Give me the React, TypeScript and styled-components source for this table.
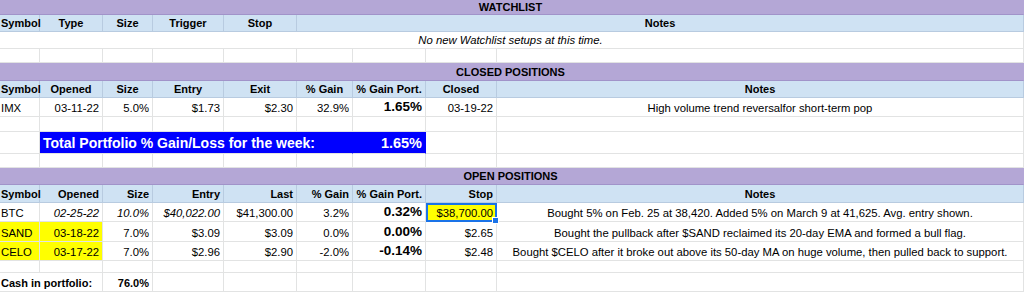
import React from 'react';
import styled, { createGlobalStyle } from 'styled-components';

const GlobalStyle = createGlobalStyle`
  html, body {
    margin: 0;
    padding: 0;
    background: #ffffff;
  }
  body {
    font-family: "Liberation Sans", Arial, sans-serif;
    font-size: 11px;
    color: #000000;
  }
`;

type Align = 'left' | 'center' | 'right';
type Kind = 'title' | 'head' | 'body';

const justify = (a?: Align) => (a === 'right' ? 'flex-end' : a === 'center' ? 'center' : 'flex-start');

const Sheet = styled.div`
  width: 1024px;
  height: 292px;
  overflow: hidden;
  background: #ffffff;
`;

const Row = styled.div<{ $h: number; $kind?: Kind }>`
  display: grid;
  grid-template-columns: 40px 63px 50px 71px 73px 56px 73px 71px 1fr;
  height: ${(p) => p.$h}px;
  background: ${(p) => (p.$kind === 'title' ? '#b4a7d6' : p.$kind === 'head' ? '#cfe2f3' : '#ffffff')};
  box-sizing: border-box;
`;

const Cell = styled.div<{
  $span?: number;
  $align?: Align;
  $bold?: boolean;
  $italic?: boolean;
  $size?: number;
  $bg?: string;
  $kind?: Kind;
  $white?: boolean;
}>`
  grid-column: span ${(p) => p.$span ?? 1};
  display: flex;
  align-items: flex-end;
  justify-content: ${(p) => justify(p.$align)};
  padding: 0 3px 2px 3px;
  box-sizing: border-box;
  min-width: 0;
  white-space: nowrap;
  overflow: visible;
  position: relative;
  font-size: ${(p) => p.$size ?? (p.$bold ? 11 : 11.3)}px;
  font-weight: ${(p) => (p.$bold ? 700 : 400)};
  font-style: ${(p) => (p.$italic ? 'italic' : 'normal')};
  color: ${(p) => (p.$white ? '#ffffff' : '#000000')};
  background: ${(p) => p.$bg ?? 'transparent'};
  border-right: 1px solid
    ${(p) => (p.$bg === '#0000ff' ? '#0000ff' : p.$kind === 'head' ? '#b8cbe0' : p.$kind === 'title' ? '#b4a7d6' : '#e2e3e3')};
  border-bottom: 1px solid
    ${(p) => (p.$kind === 'head' ? '#b8cbe0' : p.$kind === 'title' ? '#a193c9' : '#e2e3e3')};

  &:first-child {
    padding-left: 1px;
  }
`;

const TitleCell = styled(Cell)`
  align-items: center;
  padding-bottom: 0;
`;

const Selected = styled(Cell)`
  border: 2px solid #1a73e8;
  padding: 0 2px 1px 2px;
`;

const Handle = styled.span`
  position: absolute;
  right: -4px;
  bottom: -4px;
  width: 5px;
  height: 5px;
  background: #1a73e8;
  border: 1px solid #ffffff;
  z-index: 2;
`;

type C = {
  t?: string;
  span?: number;
  align?: Align;
  bold?: boolean;
  italic?: boolean;
  size?: number;
  bg?: string;
  white?: boolean;
};

const Line: React.FC<{ h: number; kind?: Kind; cells: C[] }> = ({ h, kind = 'body', cells }) => (
  <Row $h={h} $kind={kind}>
    {cells.map((c, i) => (
      <Cell
        key={i}
        $kind={kind}
        $span={c.span}
        $align={c.align ?? (kind === 'head' ? 'center' : 'left')}
        $bold={c.bold ?? kind === 'head'}
        $italic={c.italic}
        $size={c.size}
        $bg={c.bg}
        $white={c.white}
      >
        {c.t}
      </Cell>
    ))}
  </Row>
);

const Title: React.FC<{ h: number; text: string }> = ({ h, text }) => (
  <Row $h={h} $kind="title">
    <TitleCell $kind="title" $span={9} $align="center" $bold>
      {text}
    </TitleCell>
  </Row>
);

const blanks = (n: number): C[] => Array.from({ length: n }, () => ({}));

const R = (t: string, extra: Partial<C> = {}): C => ({ t, align: 'right', ...extra });
const N = (t: string): C => ({ t, align: 'center' });
const Y = '#ffff00';
const BIG = 13.5;

export default function App() {
  return (
    <>
      <GlobalStyle />
      <Sheet>
        <Title h={15} text="WATCHLIST" />
        <Line
          h={17}
          kind="head"
          cells={[{ t: 'Symbol', align: 'left' }, { t: 'Type' }, { t: 'Size' }, { t: 'Trigger' }, { t: 'Stop' }, { t: 'Notes', span: 4 }]}
        />
        <Line h={17} cells={[{ t: 'No new Watchlist setups at this time.', span: 9, align: 'center', italic: true }]} />
        <Line h={14} cells={blanks(9)} />

        <Title h={18} text="CLOSED POSITIONS" />
        <Line
          h={17}
          kind="head"
          cells={[
            { t: 'Symbol', align: 'left' },
            { t: 'Opened' },
            { t: 'Size' },
            { t: 'Entry' },
            { t: 'Exit' },
            { t: '% Gain' },
            { t: '% Gain Port.' },
            { t: 'Closed' },
            { t: 'Notes' },
          ]}
        />
        <Line
          h={19}
          cells={[
            { t: 'IMX' },
            R('03-11-22'),
            R('5.0%'),
            R('$1.73'),
            R('$2.30'),
            R('32.9%'),
            R('1.65%', { bold: true, size: BIG }),
            R('03-19-22'),
            N('High volume trend reversalfor short-term pop'),
          ]}
        />
        <Line h={15} cells={blanks(9)} />
        <Line
          h={22}
          cells={[
            {},
            { t: 'Total Portfolio % Gain/Loss for the week:', span: 5, bold: true, size: 14, bg: '#0000ff', white: true },
            R('1.65%', { bold: true, size: 14.5, bg: '#0000ff', white: true }),
            {},
            {},
          ]}
        />
        <Line h={14} cells={blanks(9)} />

        <Title h={17} text="OPEN POSITIONS" />
        <Line
          h={18}
          kind="head"
          cells={[
            { t: 'Symbol', align: 'left' },
            R('Opened'),
            R('Size'),
            R('Entry'),
            R('Last'),
            R('% Gain'),
            R('% Gain Port.'),
            R('Stop'),
            { t: 'Notes' },
          ]}
        />
        <Row $h={19}>
          <Cell>BTC</Cell>
          <Cell $align="right" $italic>02-25-22</Cell>
          <Cell $align="right" $italic>10.0%</Cell>
          <Cell $align="right" $italic>$40,022.00</Cell>
          <Cell $align="right">$41,300.00</Cell>
          <Cell $align="right">3.2%</Cell>
          <Cell $align="right" $bold $size={BIG}>0.32%</Cell>
          <Selected $align="right" $bg={Y}>
            $38,700.00
            <Handle />
          </Selected>
          <Cell $align="center">Bought 5% on Feb. 25 at 38,420. Added 5% on March 9 at 41,625. Avg. entry shown.</Cell>
        </Row>
        <Line
          h={20}
          cells={[
            { t: 'SAND', bg: Y },
            R('03-18-22', { bg: Y }),
            R('7.0%'),
            R('$3.09'),
            R('$3.09'),
            R('0.0%'),
            R('0.00%', { bold: true, size: BIG }),
            R('$2.65'),
            N('Bought the pullback after $SAND reclaimed its 20-day EMA and formed a bull flag.'),
          ]}
        />
        <Line
          h={19}
          cells={[
            { t: 'CELO', bg: Y },
            R('03-17-22', { bg: Y }),
            R('7.0%'),
            R('$2.96'),
            R('$2.90'),
            R('-2.0%'),
            R('-0.14%', { bold: true, size: BIG }),
            R('$2.48'),
            N('Bought $CELO after it broke out above its 50-day MA on huge volume, then pulled back to support.'),
          ]}
        />
        <Line h={12} cells={blanks(9)} />
        <Line
          h={19}
          cells={[
            { t: 'Cash in portfolio:', span: 2, bold: true },
            R('76.0%', { bold: true }),
            ...blanks(6),
          ]}
        />
      </Sheet>
    </>
  );
}
